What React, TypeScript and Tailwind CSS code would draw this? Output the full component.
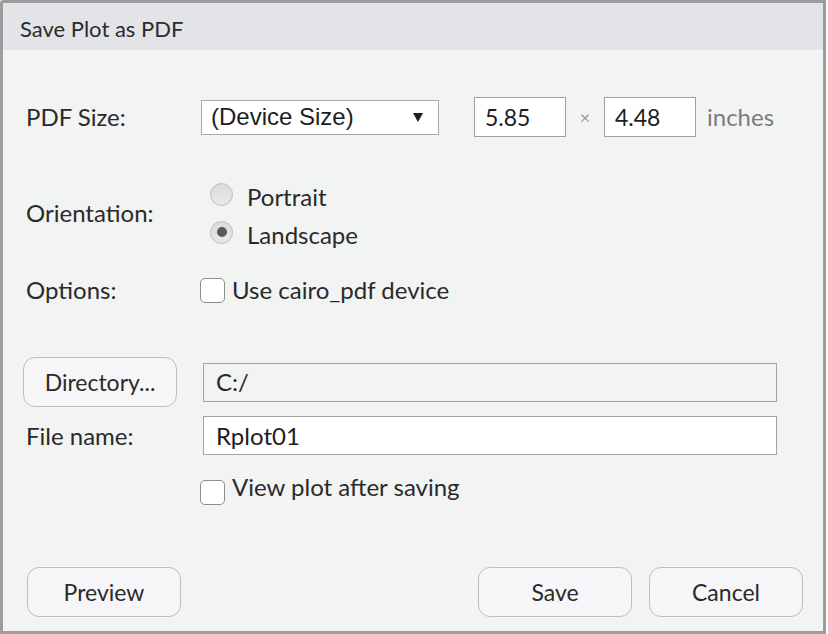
import React from 'react';

const font = { fontFamily: 'Lato, "Open Sans", sans-serif' };

function Radio({ checked, label }: { checked?: boolean; label: string }) {
  return (
    <div className="flex h-[38px] items-center">
      <span className="flex h-[23px] w-[23px] shrink-0 items-center justify-center rounded-full border border-[#bcbcbc] bg-gradient-to-b from-[#dcdcdc] to-[#e8e8e8]">
        {checked && <span className="h-[10px] w-[10px] rounded-full bg-[#5a5a5a]" />}
      </span>
      <span className="ml-[14px] mt-[6px] text-[24px] leading-[28px] text-[#2a2a2a]">{label}</span>
    </div>
  );
}

function Checkbox({ label, drop }: { label: string; drop?: boolean }) {
  return (
    <div className="flex items-start">
      <span
        className={
          'h-[25px] w-[25px] shrink-0 rounded-[5px] border border-[#8c8c8c] bg-white ' +
          (drop ? 'mt-[7px]' : 'mt-[2px]')
        }
      />
      <span className="ml-[7px] text-[24px] leading-[28px] text-[#2a2a2a]">{label}</span>
    </div>
  );
}

function DlgButton({ label, className }: { label: string; className?: string }) {
  return (
    <button
      className={
        'flex h-[50px] w-[154px] shrink-0 items-center justify-center rounded-[12px] border border-[#bdbdbd] bg-[#f6f6f8] text-[23px] text-[#2a2a2a] ' +
        (className ?? '')
      }
    >
      {label}
    </button>
  );
}

export default function App() {
  return (
    <div className="h-[634px] w-[828px] bg-white" style={font}>
      <div className="flex h-[634px] w-[826px] flex-col rounded-tl-[3px] border-[3px] border-[#9c9c9c] bg-[#f2f3f3]">
        {/* Title bar */}
        <div className="flex h-[47px] shrink-0 items-center bg-[#e3e4e8] pl-[17px] pt-[4px] text-[22px] text-[#2b2b2b]">
          Save Plot as PDF
        </div>

        <div className="flex flex-1 flex-col pl-[23px] pr-[46px]">
          {/* PDF Size */}
          <div className="mt-[47px] flex h-[40px] items-center">
            <span className="w-[175px] shrink-0 text-[24px] text-[#2a2a2a]">PDF Size:</span>
            <div
              className="flex h-[35px] w-[238px] items-center justify-between border border-[#a8a8a8] bg-white pl-[9px] pr-[15px] text-[24px] text-[#1e1e1e]"
              style={{ fontFamily: '"Liberation Sans", Arial, sans-serif' }}
            >
              <span>(Device Size)</span>
              <svg width="10" height="9" viewBox="0 0 10 9">
                <path d="M0 0H10L5 9Z" fill="#1e1e1e" />
              </svg>
            </div>
            <div className="ml-[35px] flex h-[40px] w-[92px] items-center border border-[#9f9f9f] bg-white pl-[10px] text-[23px] text-[#1e1e1e]">
              5.85
            </div>
            <span className="w-[38px] text-center text-[18px] text-[#9a9a9a]">×</span>
            <div className="flex h-[40px] w-[92px] items-center border border-[#9f9f9f] bg-white pl-[10px] text-[23px] text-[#1e1e1e]">
              4.48
            </div>
            <span className="ml-[11px] text-[24px] text-[#7c7c7c]">inches</span>
          </div>

          {/* Orientation */}
          <div className="mt-[38px] flex items-center">
            <span className="w-[184px] shrink-0 text-[24px] text-[#2a2a2a]">Orientation:</span>
            <div className="flex flex-col">
              <Radio label="Portrait" />
              <Radio checked label="Landscape" />
            </div>
          </div>

          {/* Options */}
          <div className="mt-[25px] flex h-[28px] items-center">
            <span className="w-[174px] shrink-0 text-[24px] text-[#2a2a2a]">Options:</span>
            <Checkbox label="Use cairo_pdf device" />
          </div>

          {/* Directory */}
          <div className="mt-[53px] flex items-center">
            <DlgButton label="Directory..." className="-ml-[3px] mr-[26px]" />
            <div className="flex h-[39px] flex-1 items-center border border-[#a3a3a3] bg-[#f2f3f3] pl-[12px] text-[24px] text-[#2a2a2a]">
              C:/
            </div>
          </div>

          {/* File name */}
          <div className="mt-[9px] flex items-center">
            <span className="w-[177px] shrink-0 text-[24px] text-[#2a2a2a]">File name:</span>
            <div className="flex h-[39px] flex-1 items-center border border-[#a3a3a3] bg-white pl-[12px] text-[24px] text-[#1e1e1e]">
              Rplot01
            </div>
          </div>

          {/* View plot */}
          <div className="mt-[18px] ml-[174px]">
            <Checkbox drop label="View plot after saving" />
          </div>

          {/* Buttons */}
          <div className="mt-auto mb-[14px] flex items-center">
            <DlgButton label="Preview" className="ml-[1px]" />
            <div className="flex-1" />
            <DlgButton label="Save" className="mr-[17px]" />
            <DlgButton label="Cancel" className="-mr-[26px]" />
          </div>
        </div>
      </div>
    </div>
  );
}
